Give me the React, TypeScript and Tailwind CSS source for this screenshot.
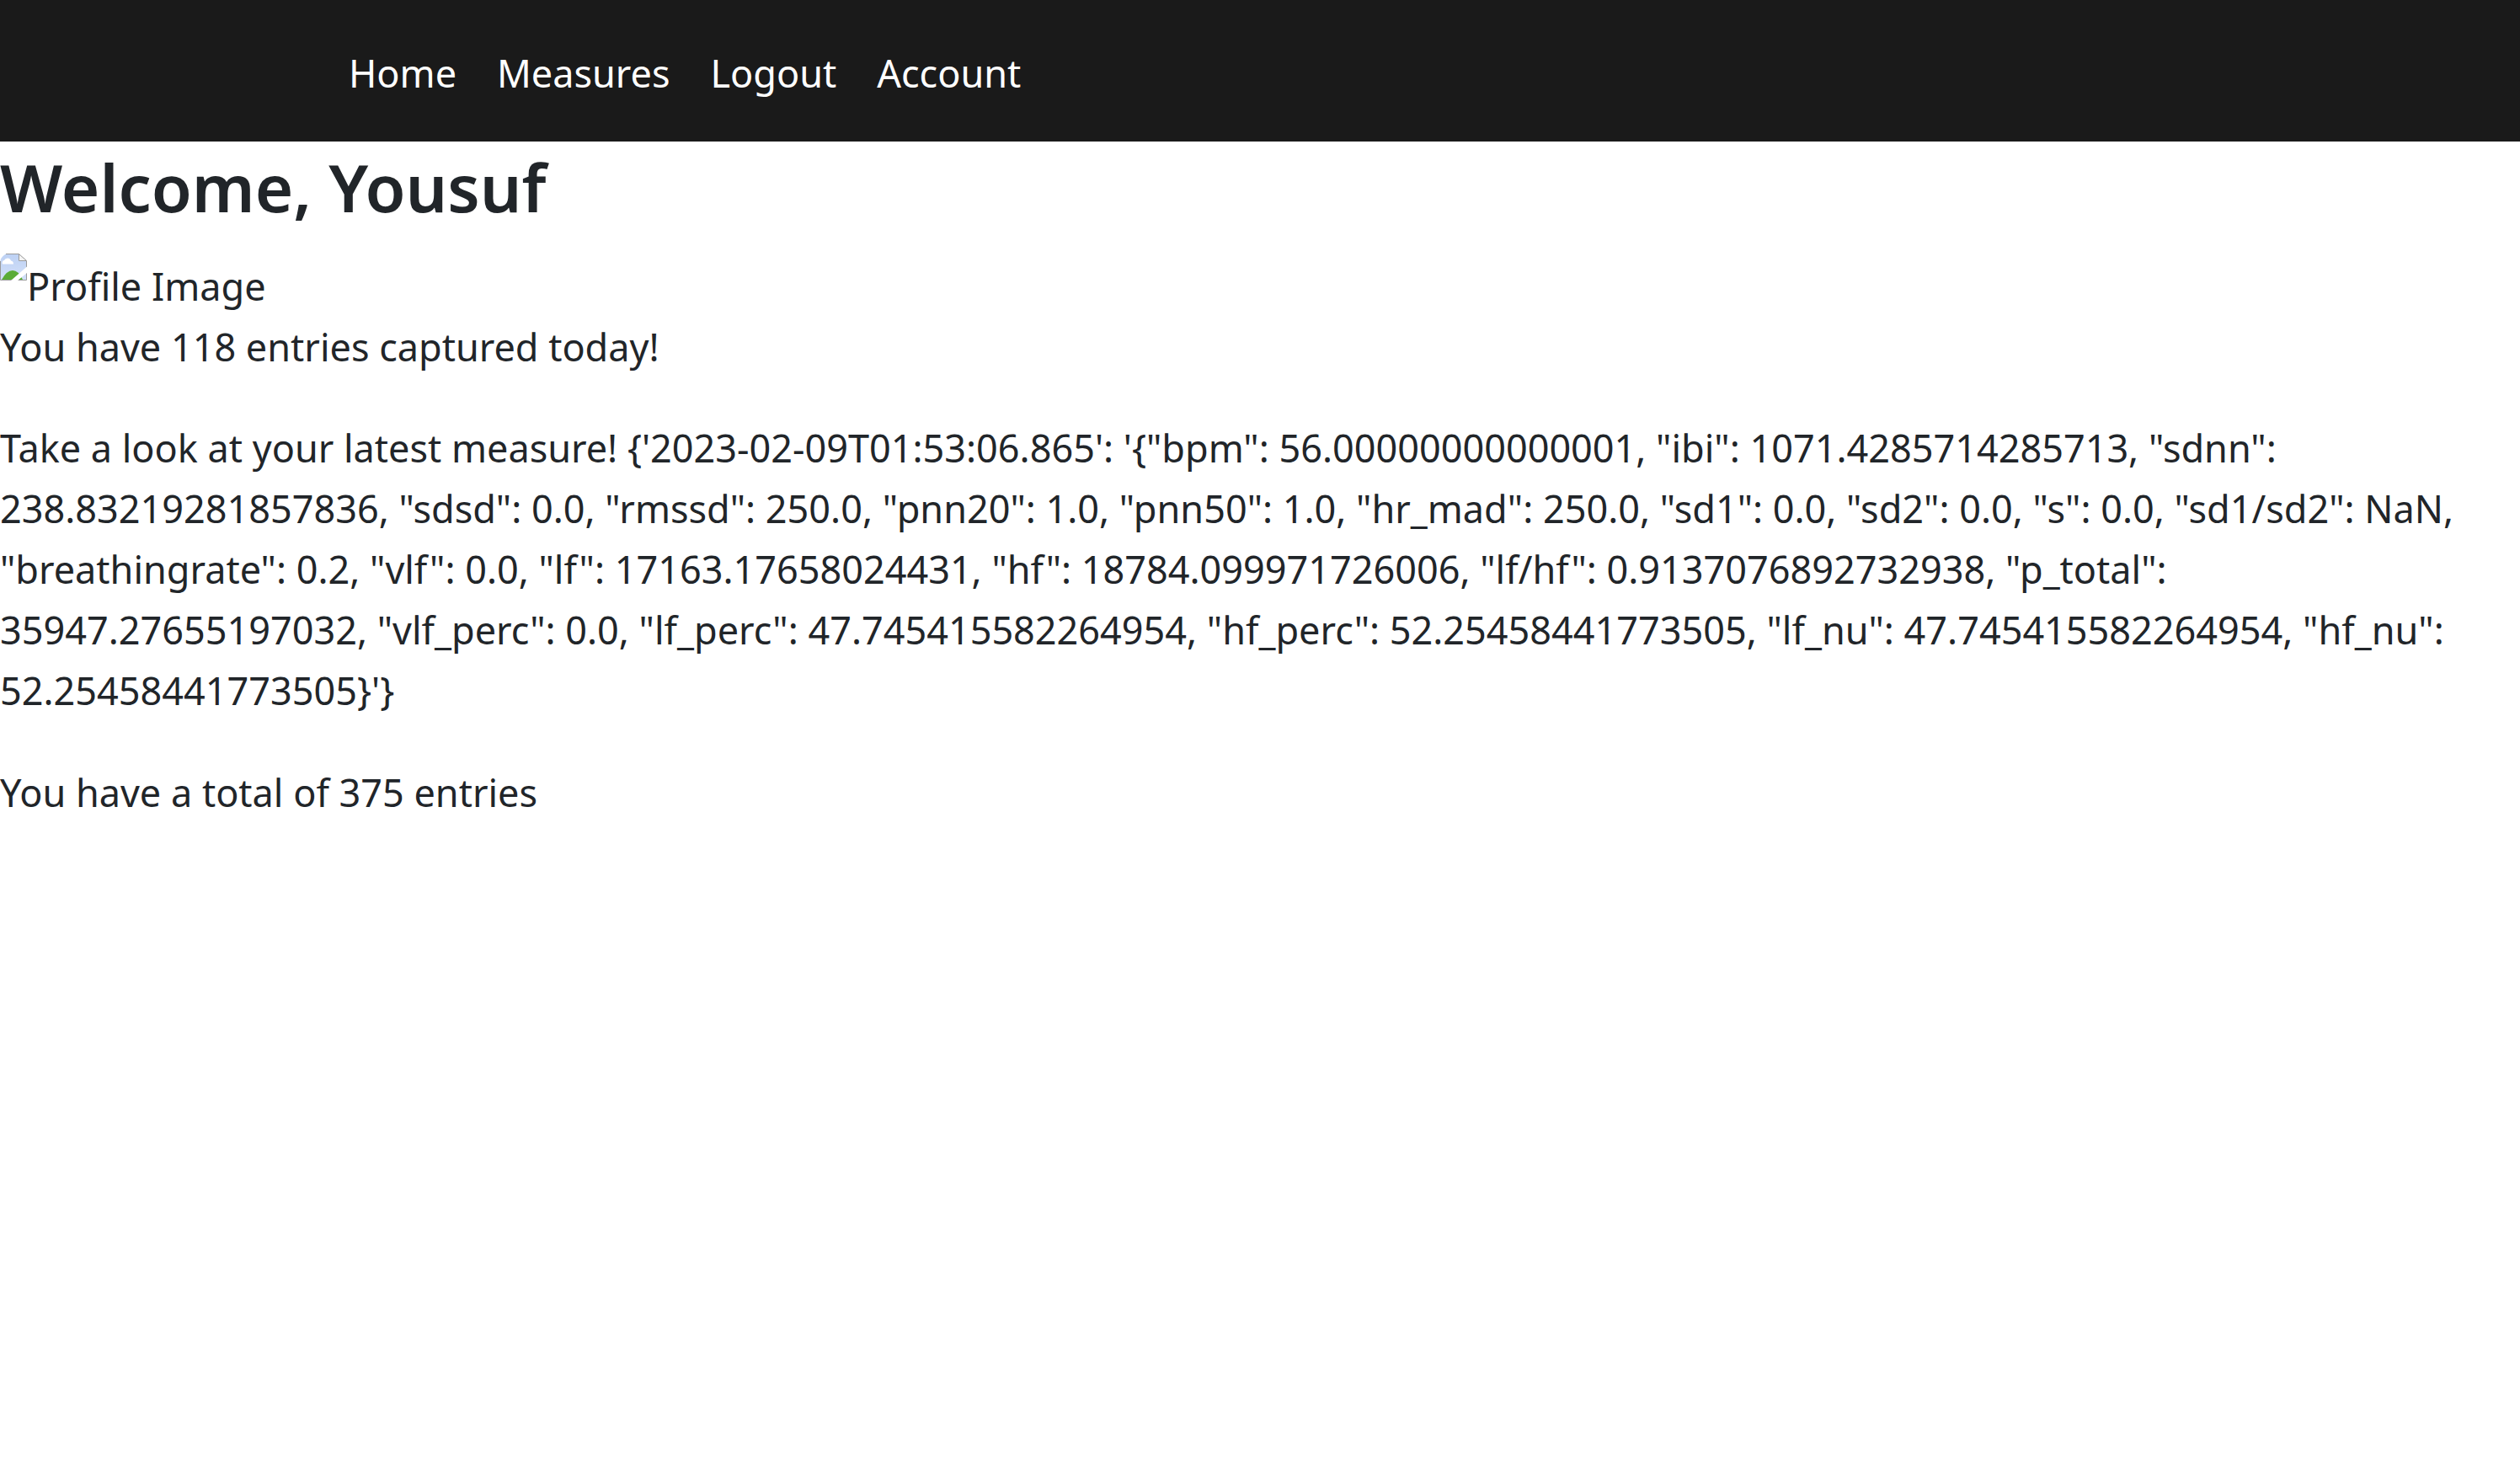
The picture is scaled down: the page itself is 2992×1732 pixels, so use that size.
const links = ["Home", "Measures", "Logout", "Account"];

const latest = `{'2023-02-09T01:53:06.865': '{"bpm": 56.00000000000001, "ibi": 1071.4285714285713, "sdnn": 238.83219281857836, "sdsd": 0.0, "rmssd": 250.0, "pnn20": 1.0, "pnn50": 1.0, "hr_mad": 250.0, "sd1": 0.0, "sd2": 0.0, "s": 0.0, "sd1/sd2": NaN, "breathingrate": 0.2, "vlf": 0.0, "lf": 17163.17658024431, "hf": 18784.099971726006, "lf/hf": 0.9137076892732938, "p_total": 35947.27655197032, "vlf_perc": 0.0, "lf_perc": 47.745415582264954, "hf_perc": 52.25458441773505, "lf_nu": 47.745415582264954, "hf_nu": 52.25458441773505}'}`;

function BrokenImageIcon() {
  return (
    <svg viewBox="0 0 32 32" className="h-8 w-8 shrink-0" aria-hidden="true">
      <defs>
        <linearGradient id="sky" x1="0" y1="0" x2="0" y2="1">
          <stop offset="0" stopColor="#bdd1f4" />
          <stop offset="1" stopColor="#d3e0f8" />
        </linearGradient>
      </defs>
      <path d="M.5 31V8Q2 3 7 .5H22L31.5 9V31Z" fill="url(#sky)" />
      <path d="M3 12.5A3 3 0 0 1 5 8Q6 5.5 9 5.5T13 8.5Q16 9 16 12.5Z" fill="#fff" />
      <path d="M2 31Q8 20 15 20T27 31Z" fill="#5aac36" />
      <path d="M.5 31.5V9M7 .5H22L31.5 9V31.5H.5" fill="none" stroke="#9b9b9b" />
      <path d="M22.5 .5V8.5H31.5Z" fill="#f4f4f4" stroke="#9b9b9b" />
      <path d="M32 15.5V23L21 32H13Z" fill="#fff" />
    </svg>
  );
}

export default function App() {
  return (
    <div className="min-h-screen bg-white font-['Noto_Sans',sans-serif] text-[45px] leading-[72px] text-[#212529]">
      <nav className="bg-[#1a1a1a] pt-[51px] pb-[45px] pl-[414px]">
        <ul className="flex gap-12 text-white">
          {links.map((label) => (
            <li key={label}>
              <a href="#">{label}</a>
            </li>
          ))}
        </ul>
      </nav>
      <main>
        <h1 className="mb-6 text-[78px] leading-[109px] font-semibold">Welcome, Yousuf</h1>
        <div className="flex items-start">
          <BrokenImageIcon />
          <span className="pt-[3px]">Profile Image</span>
        </div>
        <p>You have 118 entries captured today!</p>
        <p className="mt-12">Take a look at your latest measure! {latest}</p>
        <p className="mt-[49px]">You have a total of 375 entries</p>
      </main>
    </div>
  );
}
